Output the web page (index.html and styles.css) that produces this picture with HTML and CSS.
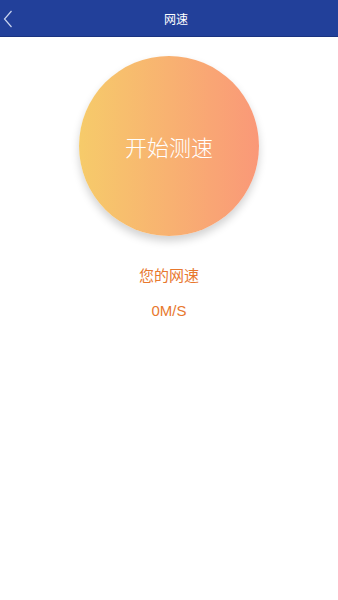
FILE: index.html
```html
<!DOCTYPE html>
<html>
<head>
<meta charset="utf-8">
<link rel="stylesheet" href="styles.css">
</head>
<body>
<div class="header">
  <svg class="back" width="10" height="18" viewBox="0 0 10 18"><path d="M8.5 1 L1.5 9 L8.5 17" fill="none" stroke="#c9d3ee" stroke-width="1.2"/></svg>
  <span class="title">网速</span>
</div>
<div class="main">
  <div class="circle">开始测速</div>
  <div class="label">您的网速</div>
  <div class="speed">0M/S</div>
</div>
</body>
</html>
```
FILE: styles.css
```css
html, body { margin: 0; padding: 0; background: #fff; }
body { font-family: "Noto Sans CJK SC", "Noto Sans", sans-serif; width: 338px; height: 600px; overflow: hidden; }
.header {
  position: relative;
  height: 36px;
  background: #22409a;
  border-bottom: 1px solid #1a3380;
  display: flex;
  align-items: center;
  justify-content: center;
  padding-left: 14px;
}
.back { position: absolute; left: 3px; top: 10px; }
.title { color: #fff; font-size: 12px; }
.main { display: flex; flex-direction: column; align-items: center; }
.circle {
  margin-top: 19px;
  width: 180px;
  height: 180px;
  border-radius: 50%;
  background: linear-gradient(to right, #f6cb6a, #fa9878);
  box-shadow: 0 5px 8px rgba(0,0,0,0.18);
  display: flex;
  align-items: center;
  justify-content: center;
  color: #fff;
  font-size: 22px;
  font-weight: 300;
}
.label { margin-top: 29px; color: #e8782e; font-size: 15px; line-height: 20px; }
.speed { margin-top: 16px; color: #e8782e; font-size: 15px; line-height: 20px; font-family: "Liberation Sans", sans-serif; }
```
